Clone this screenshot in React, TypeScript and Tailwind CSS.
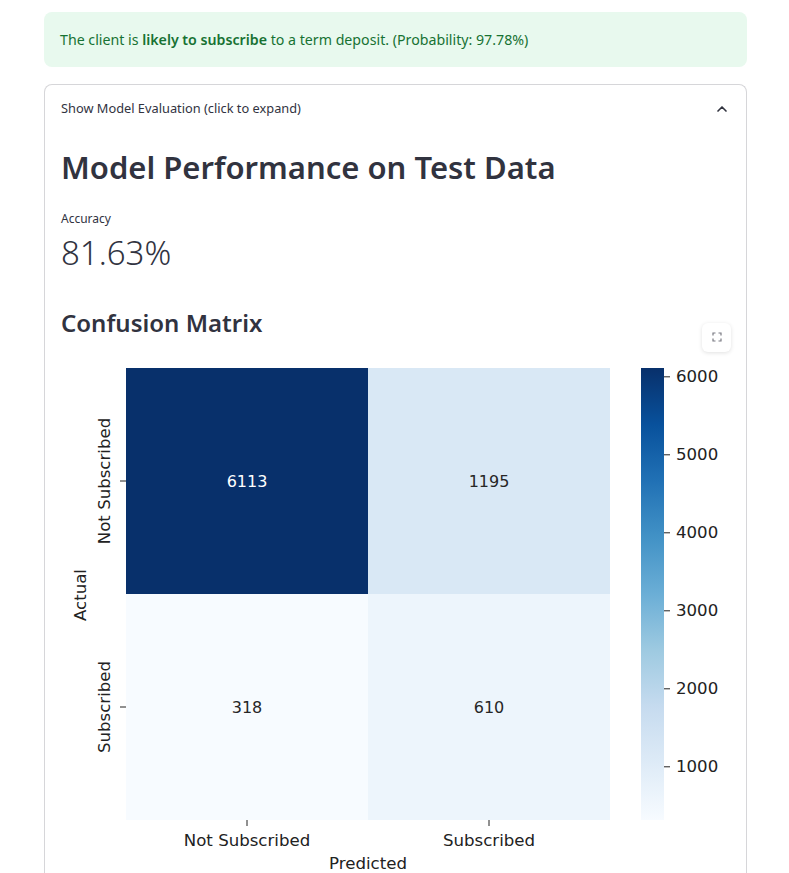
import { ChevronUp } from "lucide-react";

const blues = ["#f7fbff", "#deebf7", "#c6dbef", "#9ecae1", "#6baed6", "#4292c6", "#2171b5", "#08519c", "#08306b"];

function cmap(t: number) {
  const x = Math.max(0, Math.min(1, t)) * (blues.length - 1);
  const i = Math.min(Math.floor(x), blues.length - 2);
  const f = x - i;
  const a = blues[i];
  const b = blues[i + 1];
  const ch = (h: string, k: number) => parseInt(h.slice(1 + k * 2, 3 + k * 2), 16);
  const mix = [0, 1, 2].map((k) => Math.round(ch(a, k) + (ch(b, k) - ch(a, k)) * f));
  return `rgb(${mix.join(",")})`;
}

const vmin = 318;
const vmax = 6113;
const cells = [
  { v: 6113, x: 126, y: 368 },
  { v: 1195, x: 368, y: 368 },
  { v: 318, x: 126, y: 594 },
  { v: 610, x: 368, y: 594 },
];

// colorbar geometry (page coordinates)
const cbTop = 368;
const cbBottom = 820;
const cbY = (v: number) => cbBottom - ((v - vmin) / (vmax - vmin)) * (cbBottom - cbTop);

function ConfusionChart() {
  const font = "'DejaVu Sans', sans-serif";
  const fs = 16.6;
  return (
    <svg width={670} height={517} viewBox="61 356 670 517" className="block">
      <defs>
        <linearGradient id="cb" x1="0" y1="1" x2="0" y2="0">
          {blues.map((c, i) => (
            <stop key={c} offset={i / (blues.length - 1)} stopColor={c} />
          ))}
        </linearGradient>
      </defs>
      {cells.map((c) => {
        const t = (c.v - vmin) / (vmax - vmin);
        return (
          <g key={c.v}>
            <rect x={c.x} y={c.y} width={242} height={226} fill={cmap(t)} />
            <text
              x={c.x + 121}
              y={c.y + 113}
              textAnchor="middle"
              dominantBaseline="central"
              fontFamily={font}
              fontSize={16}
              fill={t > 0.5 ? "#ffffff" : "#262626"}
            >
              {c.v}
            </text>
          </g>
        );
      })}
      {/* y ticks */}
      <line x1={120} x2={126} y1={481} y2={481} stroke="#222" strokeWidth={1} />
      <line x1={120} x2={126} y1={707} y2={707} stroke="#222" strokeWidth={1} />
      <text transform="translate(104 481) rotate(-90)" textAnchor="middle" dominantBaseline="central" fontFamily={font} fontSize={fs} fill="#222">
        Not Subscribed
      </text>
      <text transform="translate(104 707) rotate(-90)" textAnchor="middle" dominantBaseline="central" fontFamily={font} fontSize={fs} fill="#222">
        Subscribed
      </text>
      <text transform="translate(80 595) rotate(-90)" textAnchor="middle" dominantBaseline="central" fontFamily={font} fontSize={fs} fill="#222">
        Actual
      </text>
      {/* x ticks */}
      <line x1={247} x2={247} y1={820} y2={826} stroke="#222" strokeWidth={1} />
      <line x1={489} x2={489} y1={820} y2={826} stroke="#222" strokeWidth={1} />
      <text x={247} y={840} textAnchor="middle" dominantBaseline="central" fontFamily={font} fontSize={fs} fill="#222">
        Not Subscribed
      </text>
      <text x={489} y={840} textAnchor="middle" dominantBaseline="central" fontFamily={font} fontSize={fs} fill="#222">
        Subscribed
      </text>
      <text x={368} y={863} textAnchor="middle" dominantBaseline="central" fontFamily={font} fontSize={fs} fill="#222">
        Predicted
      </text>
      {/* colorbar */}
      <rect x={641} y={cbTop} width={23} height={cbBottom - cbTop} fill="url(#cb)" />
      {[1000, 2000, 3000, 4000, 5000, 6000].map((v) => (
        <g key={v}>
          <line x1={664} x2={670} y1={cbY(v)} y2={cbY(v)} stroke="#222" strokeWidth={1} />
          <text x={676} y={cbY(v)} dominantBaseline="central" fontFamily={font} fontSize={fs} fill="#222">
            {v}
          </text>
        </g>
      ))}
    </svg>
  );
}

export default function App() {
  return (
    <div className="min-h-screen bg-white text-[#31333f]" style={{ fontFamily: "'Noto Sans', sans-serif" }}>
      <div className="pt-3 pr-[42px] pl-[44px]">
        <div className="flex h-[55px] items-center rounded-lg bg-[#e8f9ee] px-4 text-[14.2px] text-[#177233]">
          <p>
            The client is <span className="font-semibold">likely to subscribe</span> to a term deposit. (Probability: 97.78%)
          </p>
        </div>

        <div className="mt-[17px] rounded-t-lg border border-b-0 border-[#d6d6d9]">
          <div className="flex h-[47px] items-center justify-between px-4 text-[12.8px]">
            <span>Show Model Evaluation (click to expand)</span>
            <ChevronUp className="h-4 w-4 text-[#31333f]" strokeWidth={2.5} />
          </div>
          <div className="px-4">
            <h1 className="pt-[17px] text-[31px] leading-[1.2] font-semibold">Model Performance on Test Data</h1>
            <div className="mt-[24px] text-[12px] leading-[18px]">Accuracy</div>
            <div className="mt-[5px] text-[33px] leading-[1.2] font-light">81.63%</div>
            <h2 className="mt-[36px] text-[24px] leading-[1.2] font-semibold">Confusion Matrix</h2>
            <div className="relative mt-[18px]">
              <button className="absolute -top-[33px] -right-[1px] flex h-[29px] w-[29px] items-center justify-center rounded-md bg-white shadow-[0_1px_4px_rgba(0,0,0,0.12)]">
                <svg width="10" height="10" viewBox="0 0 10 10" fill="none" stroke="#7a7b83" strokeWidth="1.2">
                  <path d="M1 3.5V1h2.5M6.5 1H9v2.5M9 6.5V9H6.5M3.5 9H1V6.5" />
                </svg>
              </button>
              <ConfusionChart />
            </div>
          </div>
        </div>
      </div>
    </div>
  );
}
